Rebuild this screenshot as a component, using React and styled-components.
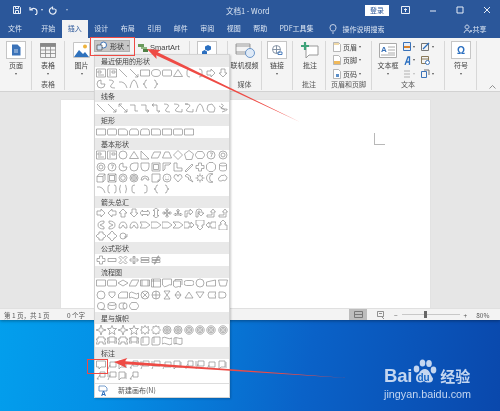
import React from "react";
import styled, { createGlobalStyle } from "styled-components";

const Global = createGlobalStyle`
  html, body { margin: 0; padding: 0; background: #0a6fd0; }
  * { box-sizing: border-box; }
`;

const Root = styled.div`
  position: relative; width: 500px; height: 411px; overflow: hidden;
  font-family: "Noto Sans CJK SC", "Liberation Sans", sans-serif;
  font-size: 7px; color: #444; filter: blur(0.4px);
  display: flex; flex-direction: column;
  background: linear-gradient(100deg, #02a6f0 0%, #0490e6 30%, #0a62c8 65%, #0a48ac 100%);
`;
const Win = styled.div`
  width: 500px; height: 320px; display: flex; flex-direction: column; flex: none;
  box-shadow: 0 1px 3px rgba(0,0,0,.35);
`;
const TitleBar = styled.div`
  height: 20px; background: #2b579a; color: #e8eef7; display: flex; align-items: center;
  position: relative; flex: none;
`;
const QuickBar = styled.div`display: flex; align-items: center; padding-left: 13px; width: 226px;`;
const QuickIcon = styled.span`display: flex; margin-left: ${p => p.$ml || 0}px;`;
const Title = styled.div`width: 139px; font-size: 7.5px; color: #dbe5f2; white-space: nowrap;`;
const Login = styled.div`
  width: 24px; height: 11px; background: #fff; color: #2b579a; font-size: 7px; line-height: 11px; text-align: center;
`;
const WinBtns = styled.div`display: flex; align-items: center; margin-left: 12px; gap: 16px;`;
const TabRow = styled.div`
  height: 18px; background: #2b579a; display: flex; align-items: stretch; flex: none; padding-left: 2px;
`;
const Tab = styled.div`
  width: ${p => p.$w || 26.5}px; margin-right: ${p => p.$mr || 0}px; margin-left: ${p => p.$ml || 0}px;
  text-align: center; line-height: 17px; white-space: nowrap;
  color: ${p => (p.$active ? "#2b579a" : "#dde6f3")};
  background: ${p => (p.$active ? "#f3f3f3" : "transparent")};
`;
const Search = styled.div`display: flex; align-items: center; gap: 6px; margin-left: 12px; color: #dde6f3;`;
const Share = styled.div`display: flex; align-items: center; gap: 1px; margin-left: 78px; color: #dde6f3;`;

const Ribbon = styled.div`
  height: 54px; background: #f4f4f4; border-bottom: 1px solid #d2d2d2; display: flex; padding: 3px 0 1px; flex: none; position: relative;
`;
const Group = styled.div`
  width: ${p => p.$w}px; border-right: 1px solid #d8d8d8;
  display: flex; flex-direction: column; flex: none;
`;
const GroupBody = styled.div`
  flex: 1; display: flex; align-items: flex-start; gap: ${p => p.$gap || 0}px;
  padding-left: ${p => p.$pl || 0}px;
`;
const GroupLabel = styled.div`height: 11px; line-height: 10px; text-align: center; color: #555; white-space: nowrap;`;
const Big = styled.div`
  width: ${p => p.$w || 18}px; display: flex; flex-direction: column; align-items: center; flex: none; white-space: nowrap;
`;
const IconBox = styled.div`
  width: ${p => p.$w || 20}px; height: 18px; display: flex; align-items: center; justify-content: center;
  background: ${p => (p.$framed ? "#fff" : "transparent")};
  border: 1px solid ${p => (p.$framed ? "#c6c6c6" : "transparent")};
  flex: none;
`;
const BigLabel = styled.div`height: 10px; line-height: 11px; margin-top: 1px; color: #444;`;
const Caret = styled.div`
  width: 0; height: 0; border-left: 1.5px solid transparent; border-right: 1.5px solid transparent;
  border-top: 2px solid ${p => p.$c || "#555"}; margin-top: ${p => p.$mt ?? 3}px; margin-left: ${p => p.$ml || 0}px; flex: none;
`;
const ShapeBtn = styled.div`
  width: 36px; height: 12px; margin: -1px 0 0 3px; background: #c6c6c6; border: 1px solid #b0b0b0; display: flex; align-items: center; gap: 2px; padding-left: 1px; color: #333; flex: none;
`;
const SmartArt = styled.div`
  display: flex; align-items: center; gap: 2px; margin: 0 0 0 8px; height: 12px; font-family: "Liberation Sans", sans-serif; font-size: 7.5px; color: #444; flex: none;
`;
const SmallCol = styled.div`display: flex; flex-direction: column; gap: 2.5px; flex: none; margin-left: ${p => p.$ml || 0}px;`;
const SmallRow = styled.div`display: flex; align-items: center; gap: 2px; height: 11px; white-space: nowrap; color: #444;`;
const Omega = styled.span`color: #2b6fc0; font: 700 10px "Liberation Sans", sans-serif;`;
const Chevron = styled.svg`position: absolute; right: 4px; bottom: 2px;`;

const DocArea = styled.div`
  height: 216px; background: #e6e6e6; flex: none; padding: 8px 0 0 61px; overflow: hidden;
`;
const Page = styled.div`
  width: 369px; height: 300px; background: #fff; box-shadow: 0 0 1px #ccc; padding: 33px 0 0 313px;
`;
const CropMark = styled.div`width: 11px; height: 12px; border-left: 1px solid #b8b8b8; border-bottom: 1px solid #b8b8b8;`;

const Status = styled.div`
  height: 12px; background: #f3f3f3; display: flex; align-items: center; color: #555; flex: none; border-top: 1px solid #e0e0e0; padding-left: 4px; font-size: 6.5px;
`;
const StatusText = styled.span`width: ${p => p.$w}px; white-space: nowrap; flex: none;`;
const ViewBtn = styled.div`width: 18px; height: 11px; background: #bdbdbd; display: flex; align-items: center; justify-content: center; margin-left: 262px; flex: none;`;
const Zoomer = styled.div`display: flex; align-items: center; margin-left: 10px; flex: none;`;
const ZoomSign = styled.span`margin-left: ${p => p.$ml || 0}px;`;
const Slider = styled.div`width: 58px; height: 1px; background: #c8c8c8; margin: 0 4px; position: relative;`;
const Thumb = styled.div`position: absolute; left: 22px; top: -3px; width: 3px; height: 7px; background: #666;`;
const Pct = styled.span`margin-left: 9px;`;

const Menu = styled.div`
  position: absolute; left: 94px; top: 54px; width: 136px; height: 344px; background: #fff;
  border: 1px solid #d4d4d4; box-shadow: 1px 1px 2px rgba(0,0,0,.2); display: flex; flex-direction: column;
`;
const Head = styled.div`
  height: 12px; line-height: 12px; background: #e9e9e9; padding-left: 6px; color: #444; flex: none;
`;
const Sec = styled.div`padding: 0 0 0.55px 0; flex: none;`;
const IconRow = styled.div`height: 11.3px; display: flex; align-items: center; padding-left: 1px;`;
const Sh = styled.svg`width: 10px; height: 10px; margin-right: 1.05px; flex: none; fill: none; stroke: #8c8c8c; stroke-width: .7;`;
const NewCanvas = styled.div`
  flex: 1; border-top: 1px solid #ddd; display: flex; align-items: center; gap: 10px; padding-left: 3px; color: #555;
`;

const Mark = styled.div`
  position: absolute; left: ${p => p.$x}px; top: ${p => p.$y}px; width: ${p => p.$w}px; height: ${p => p.$h}px;
  border: 1.3px solid #ee4b45;
`;
const Overlay = styled.svg`position: absolute; left: 0; top: 0; pointer-events: none;`;

const Logo = styled.div`
  position: absolute; left: 384px; top: 358px; width: 92px; color: #c4d6f0; display: flex; flex-direction: column;
`;
const LogoTop = styled.div`display: flex; align-items: flex-end; height: 28px;`;
const Bai = styled.span`font: 700 18.5px/21px "Liberation Sans", sans-serif; letter-spacing: -.2px;`;
const Jing = styled.span`font: 700 15px/20px "Noto Sans CJK SC", sans-serif; margin-left: 2px; white-space: nowrap;`;
const Url = styled.div`font: 10.8px/12px "Liberation Sans", sans-serif; margin-top: 2px; white-space: nowrap;`;

const c = (r, cx = 5, cy = 5) => `M${cx - r} ${cy}a${r} ${r} 0 1 0 ${2 * r} 0a${r} ${r} 0 1 0 ${-2 * r} 0`;
const S = {
  rect: "M.5 2h9v6h-9z", sq: "M1 1h8v8H1z", rr: "M1.5 2h7q1 0 1 1v4q0 1-1 1h-7q-1 0-1-1V3q0-1 1-1z",
  snip: "M.5 2h7l2 2v4h-9z", snip2: "M2 2h6l1.5 2v4h-9V4z", rnd: "M2.5 2h5q2 0 2 3v3h-9V5q0-3 2-3z", rr2: "M.5 2h7q2 0 2 2v4h-9z",
  txt: "M.5 1h9v8h-9zM2 3h3v2H2zM2 7h6", vtxt: "M.5 1h9v8h-9zM5 3h3v2H5zM3 2v6",
  line: "M1 1l8 8", arr: "M1 1l8 8M9 9V6M9 9H6", dbl: "M1 1l8 8M9 9V6M9 9H6M1 1v3M1 1h3",
  elb: "M1 2h5v6h3", elbA: "M1 2h5v6h3M9 8l-2-1.5M9 8l-2 1.5", elbD: "M1 2h5v6h3M1 2l2-1.5M1 2l2 1.5M9 8l-2 1.5",
  cv: "M2 1q7 0 3 4t3 4", cvA: "M1 1q8 0 3 4t5 4M9 9V6", cvD: "M1 1q8 0 3 4t5 4M9 9V6M1 1h3", arc2: "M1 9Q3 1 5 1t4 8", free: "M2 2L6 1l3 4-1 4H3L1 6z", scr: "M3 1q4 1 1 3t3 2-3 3M1 3l6 4",
  ell: c(4), elw: "M.5 5a4.5 3.5 0 1 0 9 0a4.5 3.5 0 1 0-9 0", tri: "M5 1.5l4.5 7h-9z", rtri: "M1 1v8h8z", para: "M3 2h7L7 8H0z", trap: "M3 2h4l2.5 6h-9z", dia: "M5 .5L9.5 5 5 9.5.5 5z",
  pent: "M5 .5l4.5 3.4-1.7 5.6H2.2L.5 3.9z", hex: "M2.5 1.5h5L10 5 7.5 8.5h-5L0 5z", oct: "M3 .5h4L9.5 3v4L7 9.5H3L.5 7V3z", c7: c(4) + "M4 3h2.5L5 7", c10: c(4) + c(2),
  pie: "M5 1a4 4 0 1 0 4 4H5z", tear: "M9 1v4a4 4 0 1 1-4-4z", half: "M1 1h8v4a4 4 0 0 1-8 0z", frame: "M1 1h8v8H1zM2.5 2.5h5v5h-5z", hfr: "M1 1h8L7 3H3v4L1 9z", lsh: "M1 1h3v5h5v3H1z", pen: "M1 9l7-7 1 1-7 7z", cross: "M3.5 1h3v2.5H9v3H6.5V9h-3V6.5H1v-3h2.5z", can: "M1.5 2.5a3.5 1.5 0 0 1 7 0v5a3.5 1.5 0 0 1-7 0zM1.5 2.5a3.5 1.5 0 0 0 7 0",
  cube: "M1 3.5h6v5.5H1zM1 3.5L3 1h6v5.5L7 9M7 3.5L9 1", bev: "M1 1h8v8H1zM2.5 2.5h5v5h-5zM1 1l1.5 1.5M9 1L7.5 2.5M1 9l1.5-1.5M9 9L7.5 7.5", don: c(4) + c(2.3), no: c(4) + c(2.6) + c(1.3), barc: "M1 7a4 4 0 0 1 8 0H7a2 2 0 0 0-4 0z", fold: "M1 1h8v6L7 9H1zM7 9V7h2", sm: c(4) + "M3 6q2 2 4 0M3.5 3.8h.5M6 3.8h.5", heart: "M5 9L1 4.5Q1 1.5 3 1.5t2 2q0-2 2-2t2 3z", lit: "M3 1l4 3-1 1 3 4-5-3 1-1-4-2z", sun: c(2.5) + "M5 .5v1.5M5 8v1.5M.5 5H2M8 5h1.5M2 2l1 1M7 7l1 1M8 2L7 3M3 7L2 8", moon: "M7 1a4.5 4.5 0 1 0 0 8 3.5 4 0 0 1 0-8z", cloud: "M3 8a2 2 0 0 1-1-4q1-2.5 3-1.5 2-1.5 3 .5 2 1.500 0 4-2 1.500-3 0-1 1-2 1z",
  arc: "M1 3q6-1 8 6", bp: "M3 1Q1 1 1 3v4q0 2 2 2M7 1q2 0 2 2v4q0 2-2 2", brp: "M3 1Q2 1 2 3t-1 2q1 0 1 2t1 2M7 1q1 0 1 2t1 2q-1 0-1 2t-1 2", bl: "M6 1Q3 1 3 3v4q0 2 3 2", br: "M4 1q3 0 3 2v4q0 2-3 2", cl: "M7 1Q5 1 5 3t-2 2q2 0 2 2t2 2", cr: "M3 1q2 0 2 2t2 2q-2 0-2 2t-2 2",
  aR: "M1 3h4V1l4 4-4 4V7H1z", aL: "M9 3H5V1L1 5l4 4V7h4z", aU: "M3 9V5H1l4-4 4 4H7v4z", aD: "M3 1v4H1l4 4 4-4H7V1z", aLR: "M0 5l2.500-3v1.500h5V2L10 5 7.500 8V6.500h-5V8z", aUD: "M5 0L2 2.500h1.500v5H2L5 10l3-2.500H6.500v-5H8z", aQ: "M5 .5L3.500 2H4.500v2.500H2V3.500L.5 5 2 6.500v-1H4.500V8H3.500L5 9.500 6.500 8h-1V5.500H8v1L9.500 5 8 3.500v1H5.500V2h1z", aT: "M5 1L3.500 3h1v3H2.500V5L1 6.500 2.500 8V7h5v1L9 6.500 7.500 5v1h-2V3h1z", aB: "M1 9V3h5V1l3 3-3 3V5H3v4z", aTu: "M1 9V4q0-3 3-3t3 3v1h2L6 8 3 5h2V4q0-1-1-1T3 4v5z", aBu: "M1 7h5V4H4.500L7 1l2.500 3H8v5H1z", cvR: "M8 1Q2 1 2 5t6 4v-2L4 5l4-2z", cvL: "M2 1q6 0 6 4t-6 4V7l4-2-4-2z", cvU: "M1 8q0-6 4-6t4 6H7L5 5 3 8z", notch: "M0 2h6l4 3-4 3H0l2-3z", pentA: "M0 2h6l4 3-4 3H0z", chev: "M0 2h6l4 3-4 3H0l3-3z",
  cR: "M0 2h5v2h2V2l3 3-3 3V6H5v2H0z", cD: "M1 0h8v5H7v2h1l-3 3-3-3h1V5H1z", cL: "M10 2H5v2H3V2L0 5l3 3V6h2v2h5z", cU: "M1 10h8V5H7V3h1L5 0 2 3h1v2H1z", cLR: "M2 3h1V1h4v2h1l2 2-2 2H7v2H3V7H2L0 5z", cQ: "M5 0l2 2v1h1l2 2-2 2H7v1l-2 2-2-2V7H2L0 5l2-2h1V2z", cir: c(3) + "M9 3v3H6",
  plus: "M3.500 1h3v2.500H9v3H6.500V9h-3V6.500H1v-3h2.500z", minus: "M1 3.500h8v3H1z", times: "M2.500 1L5 3.500 7.500 1 9 2.500 6.500 5 9 7.500 7.500 9 5 6.500 2.500 9 1 7.500 3.500 5 1 2.500z", div: "M1 4h8v2H1zM4 1.500h2v1.500H4zM4 7h2v1.500H4z", eq: "M1 2.500h8v2H1zM1 5.500h8v2H1z", neq: "M1 2.500h8v2H1zM1 5.500h8v2H1zM3 9l4-8h1L4 9z",
  fTerm: "M2.500 2.500h5a2.500 2.500 0 0 1 0 5h-5a2.500 2.500 0 0 1 0-5z", fDec: "M5 2l5 3-5 3-5-3z", fIn: "M3 2h7L7 8H0z", fPre: "M.5 2h9v6h-9zM2 2v6M8 2v6", fInt: "M.5 1h9v8h-9zM2.500 1v8M.5 3h9", fDoc: "M.5 1h9v6q-2-1-4.500 1T.5 7z", fMul: "M.5 3h7v6q-2-1-3.500 0T.5 8zM2 3V1.500h7V7", fMan: "M.5 4L9.500 2v6H.5z", fTrap: "M.5 2h9L8 8H2z", fOff: "M2 2h6v3L5 8 2 5z", fCard: "M3 2h6.500v6H.5V4.500z", fTape: "M.5 3q2-2 4.500 0t4.500 0v5q-2 1.500-4.500 0T.5 8z", fSum: c(4) + "M2.200 2.200l5.600 5.600M7.800 2.200L2.200 7.800", fOr: c(4) + "M5 1v8M1 5h8", fCol: "M2 1h6L2 9h6z", fSort: "M5 1l3 4-3 4-3-4zM2 5h6", fExt: "M5 2l4 6H1z", fMer: "M1 2h8L5 8z", fSto: "M3 2h7Q8 5 10 8H3Q1 5 3 2z", fDel: "M1 2h4a3 3 0 0 1 0 6H1z", fDsk: c(3.6) + "M5 8.600h4.500", fDrm: "M1 3a4 1.500 0 0 1 8 0v4a4 1.500 0 0 1-8 0zM1 3a4 1.500 0 0 0 8 0", fDis: "M3 2h4q2 0 2 3t-2 3H3Q1 8 1 5t2-3zM7 2q-2 0-2 3t2 3",
  s4: "M5 0l1.200 3.800L10 5 6.200 6.200 5 10 3.800 6.200 0 5l3.800-1.200z", s5: "M5 .5l1.300 3H9.500L7 6l1 3.500L5 7.500 2 9.500 3 6 .5 3.500h3.200z", s8: "M5 .5L6.200 2.500 8.500 1.500 8 4 9.500 5 8 6l.5 2.500L6.200 7.500 5 9.500 3.800 7.500 1.500 8.500 2 6 .5 5 2 4 1.500 1.500 3.800 2.500z", s10: "M5 .5L6 2l2-.5V3.500l1.500 1.500L8 6.500v2L6 8 5 9.500 4 8l-2 .5v-2L.5 5 2 3.500v-2L4 2z", sn: c(4) + c(2.500) + "M4 4h2v2H4z", sd: c(4.200) + c(2.800) + c(1.400),
  rb: "M0 3h2V1h6v2h2L8.500 5 10 8H7V6H3v2H0L1.500 5z", rb2: "M2 1h6v5H2zM2 2H0l1 2-1 3h3M8 2h2L9 4l1 3H7", sc: "M3 1h6v6q0 2-2 2H1V3q0-2 2-2zM3 1v6", wv: "M0 2q2.500-1.500 5 0t5 0v6q-2.500 1.500-5 0t-5 0z", wv2: "M1 2q2-1 4 0t4 0v6q-2 1-4 0t-4 0zM3 2v6",
  co: "M.5 1h9v6H5L3 9V7H.5z", coL: "M3 2h6v5H3zM3 5l-2 4", coF: "M1 1h6v6H3L1 9zM8 2v6", coB: "M4 1h5v5H4zM4 4L1 8h2", coD: "M3 1h6v5H3zM1 1v5M3 4L1 9",
};
const rows = [
  ["最近使用的形状", [["txt","vtxt","line","arr","rect","elw","rr","tri","bl","br","aR","aD"], ["pie","cv","arc","arc2","cl","cr"]]],
  ["线条", [["line","arr","dbl","elb","elbA","elbD","cv","cvA","cvD","arc2","free","scr"]]],
  ["矩形", [["rect","rr","snip","snip2","rnd","rr2","rect","rr","rect"]]],
  ["基本形状", [["txt","vtxt","ell","tri","rtri","para","trap","dia","pent","hex","c7","c10"], ["c10","c7","pie","tear","half","frame","hfr","lsh","pen","cross","oct","can"], ["cube","bev","don","no","barc","fold","sm","heart","lit","sun","moon","cloud"], ["arc","bp","brp","bl","br","cl","cr"]]],
  ["箭头总汇", [["aR","aL","aU","aD","aLR","aUD","aQ","aT","aB","aTu","aBu","aBu"], ["cvR","cvL","cvU","cvU","notch","pentA","pentA","chev","cR","cD","cL","cU"], ["cLR","cQ","cir"]]],
  ["公式形状", [["plus","minus","times","div","eq","neq"]]],
  ["流程图", [["rect","rr","fDec","fIn","fPre","fInt","fDoc","fMul","fTerm","ell","fMan","fTrap"], ["ell","fOff","fCard","fTape","fSum","fOr","fCol","fSort","fExt","fMer","fSto","fDel"], ["fDsk","fDrm","fDis","hex"]]],
  ["星与旗帜", [["s4","s5","s4","s5","s8","s10","sn","sn","sd","sd","sd","sd"], ["rb","rb2","rb","rb2","sc","sc","wv","wv2"]]],
  ["标注", [["co","coL","coF","coB","coD","coD","coL","coF","coB","coD","coL","coF"], ["coB","coD","coF","coB"]]],
];

const arrowPts = (x1, y1, x2, y2) => {
  const l = Math.hypot(x2 - x1, y2 - y1), ux = (x2 - x1) / l, uy = (y2 - y1) / l, nx = -uy, ny = ux;
  const p = (d, w) => `${x2 - ux * d + nx * w},${y2 - uy * d + ny * w}`;
  return [`${x1},${y1}`, p(11, 1.6), p(13, 5), `${x2},${y2}`, p(13, -5), p(11, -1.6)].join(" ");
};

const Ico = ({ w = 16, h = 16, vb, children, ...r }) => (
  <svg width={w} height={h} viewBox={vb || `0 0 ${w} ${h}`} {...r}>{children}</svg>
);

export default function App() {
  return (
    <Root>
      <Global />
      <Win>
        <TitleBar>
          <QuickBar>
            <Ico w={8} h={8} fill="none" stroke="#e8eef7"><path d="M.5.5h6l1 1v6h-7zM2.500.5v2h3v-2M2.500 7.500v-3h3v3" /></Ico>
            <QuickIcon $ml={8}><Ico w={9} h={9} fill="none" stroke="#e8eef7" strokeWidth="1.200"><path d="M1 1v3h3M1.500 4Q3 2 5.500 2.500T8 6 6 8.500" /></Ico></QuickIcon>
            <Caret $mt={0} $ml={3} $c="#dde6f3" />
            <QuickIcon $ml={5}><Ico w={9} h={9} fill="none" stroke="#e8eef7" strokeWidth="1.200"><path d="M7.500 3a3.300 3.300 0 1 1-3-1.500M4.500.5v2.500h2.500" /></Ico></QuickIcon>
            <Caret $mt={0} $ml={9} $c="#a9bcd8" />
          </QuickBar>
          <Title>文档1 - Word</Title>
          <Login>登录</Login>
          <WinBtns>
            <Ico w={9} h={8} fill="none" stroke="#e8eef7"><path d="M.5.5h8v7h-8zM4.500 6V3M3 4l1.500-1.500L6 4" /></Ico>
            <QuickIcon $ml={4}><Ico w={7} h={7} fill="none" stroke="#e8eef7"><path d="M0 4h6" /></Ico></QuickIcon>
            <QuickIcon $ml={3}><Ico w={8} h={8} fill="none" stroke="#e8eef7"><path d="M1 1h6v6H1z" /></Ico></QuickIcon>
            <QuickIcon $ml={3}><Ico w={8} h={8} fill="none" stroke="#e8eef7"><path d="M1 1l6 6M7 1L1 7" /></Ico></QuickIcon>
          </WinBtns>
        </TitleBar>
        <TabRow>
          <Tab $w={26} $mr={7}>文件</Tab>
          <Tab>开始</Tab>
          <Tab $active>插入</Tab>
          {["设计", "布局", "引用", "邮件", "审阅", "视图", "帮助"].map(t => <Tab key={t}>{t}</Tab>)}
          <Tab $w={40} $ml={3}>PDF工具集</Tab>
          <Search>
            <Ico w={8} h={12} fill="none" stroke="#e8eef7" strokeWidth=".8"><path d="M2.500 8Q1 6.500 1 4.500a3 3 0 0 1 6 0Q7 6.500 5.500 8zM3 10h2" /></Ico>
            <span>操作说明搜索</span>
          </Search>
          <Share>
            <Ico w={9} h={10} fill="none" stroke="#e8eef7" strokeWidth=".8"><path d="M1 9q1-3 3-3t3 3M4 1a2 2 0 1 0 .01 0M7 7h2M8 6v2" /></Ico>
            <span>共享</span>
          </Share>
        </TabRow>
        <Ribbon>
          <Group $w={32}>
            <GroupBody $pl={6}>
              <Big $w={20}>
                <IconBox $framed><Ico w={10} h={12}><path d="M1 .5h5.500L9.500 3.500V11.500H1z" fill="#3a72b8" /><path d="M3 6h4M3 8h4" stroke="#fff" strokeWidth=".7" /></Ico></IconBox>
                <BigLabel>页面</BigLabel><Caret />
              </Big>
            </GroupBody>
            <GroupLabel />
          </Group>
          <Group $w={33}>
            <GroupBody $pl={6}>
              <Big $w={20}>
                <IconBox><Ico w={16} h={15} fill="none" stroke="#888" strokeWidth=".8"><path d="M.5 .5h15v14H.5z" /><path d="M.5 .5h15v3H.5z" fill="#888" /><path d="M.5 7h15M.5 10.500h15M5.500 3.500v11M10.500 3.500v11" /></Ico></IconBox>
                <BigLabel>表格</BigLabel><Caret />
              </Big>
            </GroupBody>
            <GroupLabel>表格</GroupLabel>
          </Group>
          <Group $w={125}>
            <GroupBody $pl={7}>
              <Big $w={19}>
                <IconBox><Ico w={17} h={16}><path d="M.5.5h16v15H.5z" fill="#fff" stroke="#c6c6c6" /><path d="M1 15l5-7 4 4 2-2 4 5z" fill="#2f72bd" /><circle cx="12" cy="4.500" r="2" fill="#eeb33c" /></Ico></IconBox>
                <BigLabel>图片</BigLabel><Caret />
              </Big>
              <ShapeBtn>
                <Ico w={12} h={10}><circle cx="7.500" cy="4" r="3" fill="#fff" stroke="#3a72b8" /><path d="M1 4h5v5H1z" fill="#cfe0f3" stroke="#4a4a4a" strokeWidth=".7" /></Ico>
                形状<Caret $mt={0} $ml={1} />
              </ShapeBtn>
              <SmartArt>
                <Ico w={10} h={9}><path d="M0 1h6v3H0z" fill="#6a9a5c" /><path d="M3 4h6v2H3z" fill="#8fb781" /><path d="M5 6h5v3H5z" fill="#4f7f45" /></Ico>
                SmartArt
              </SmartArt>
            </GroupBody>
            <GroupLabel />
          </Group>
          <Group $w={38}>
            <GroupBody $pl={7}>
              <IconBox $framed><Ico w={12} h={12}><path d="M7 1l3 1.500v3L7 7 4 5.500v-3z" fill="#2b6fc0" /><path d="M3.500 6l2.500 1.500v2.500L3.500 11.500 1 10V7.500z" fill="#2b6fc0" /></Ico></IconBox>
            </GroupBody>
          </Group>
          <Group $w={34}>
            <GroupBody $pl={3}>
              <Big $w={27}>
                <IconBox $w={24}><Ico w={20} h={16} fill="none" stroke="#777" strokeWidth=".7"><path d="M1 2h14v10H1zM1 4h14M1 10h14" /><circle cx="15" cy="11" r="4.500" fill="#dfeaf7" stroke="#3a72b8" /></Ico></IconBox>
                <BigLabel>联机视频</BigLabel>
              </Big>
            </GroupBody>
            <GroupLabel>媒体</GroupLabel>
          </Group>
          <Group $w={31}>
            <GroupBody $pl={5}>
              <Big $w={20}>
                <IconBox $framed><Ico w={12} h={12} fill="none" stroke="#7a8a9c" strokeWidth=".9"><circle cx="5.500" cy="5.500" r="4" /><path d="M1.500 5.500h8M5.500 1.500v8" /><path d="M7 8h4v2.500H7z" stroke="#3a72b8" /></Ico></IconBox>
                <BigLabel>链接</BigLabel><Caret />
              </Big>
            </GroupBody>
            <GroupLabel />
          </Group>
          <Group $w={33}>
            <GroupBody $pl={8}>
              <Big $w={18}>
                <IconBox><Ico w={18} h={17} fill="none"><path d="M5 4h12v9H8l-3 3z" fill="#fff" stroke="#999" /><path d="M4 0v8M0 4h8" stroke="#3fa37a" strokeWidth="2.200" /></Ico></IconBox>
                <BigLabel>批注</BigLabel>
              </Big>
            </GroupBody>
            <GroupLabel>批注</GroupLabel>
          </Group>
          <Group $w={46}>
            <GroupBody $pl={7}>
              <SmallCol>
                {[["页眉", "#f0d9a8", "M1 1h5v2H1z"], ["页脚", "#f0b95a", "M1 6h6v3H1z"], ["页码", "#5b8fc9", "M3 5h3v3H3z"]].map(([t, col, d]) => (
                  <SmallRow key={t}>
                    <Ico w={8} h={10}><path d="M.5.5h5l2 2v7h-7z" fill="#fff" stroke="#999" strokeWidth=".7" /><path d={d} fill={col} /></Ico>
                    {t}<Caret $mt={0} />
                  </SmallRow>
                ))}
              </SmallCol>
            </GroupBody>
            <GroupLabel>页眉和页脚</GroupLabel>
          </Group>
          <Group $w={73}>
            <GroupBody $pl={5} $gap={1}>
              <Big $w={22}>
                <IconBox><Ico w={18} h={15} fill="none"><path d="M.5.5h17v14H.5z" fill="#fff" stroke="#aaa" /><path d="M9 4h7M9 7h7M9 10h7M2 12h14" stroke="#aaa" /><text x="2" y="9" fontSize="8" fontWeight="700" fill="#3a72b8" fontFamily="Liberation Sans">A</text></Ico></IconBox>
                <BigLabel>文本框</BigLabel><Caret />
              </Big>
              <SmallCol $ml={3}>
                <SmallRow><Ico w={8} h={9}><path d="M.5.5h7v8h-7z" fill="#e8eef7" stroke="#3a72b8" /><path d="M1 4h6v2H1z" fill="#d9822b" /></Ico><Caret $mt={0} /></SmallRow>
                <SmallRow><Ico w={8} h={9}><path d="M2 9L5 1h1.500v8M3 6h3.500" fill="none" stroke="#2b6fc0" strokeWidth="1.300" /></Ico><Caret $mt={0} /></SmallRow>
                <SmallRow><Ico w={8} h={9}><path d="M1 2h6M1 5h6M1 8h6" stroke="#c8c8c8" strokeWidth="1.300" /></Ico><Caret $mt={0} $c="#bbb" /></SmallRow>
              </SmallCol>
              <SmallCol $ml={5}>
                <SmallRow><Ico w={9} h={9} fill="none"><path d="M.5 1.500h7v7h-7z" stroke="#777" /><path d="M2 7L8 1" stroke="#2b6fc0" strokeWidth="1.200" /></Ico><Caret $mt={0} /></SmallRow>
                <SmallRow><Ico w={9} h={9} fill="none"><path d="M.5.5h7v7h-7zM.5 3h7" stroke="#8a7a5a" /><circle cx="6.500" cy="6.500" r="2" stroke="#3a72b8" fill="#fff" /></Ico></SmallRow>
                <SmallRow><Ico w={9} h={9} fill="none"><path d="M.5 2.500h5v6h-5z" stroke="#3a72b8" /><path d="M3 1h5v5" stroke="#777" /></Ico><Caret $mt={0} /></SmallRow>
              </SmallCol>
            </GroupBody>
            <GroupLabel>文本</GroupLabel>
          </Group>
          <Group $w={32}>
            <GroupBody $pl={6}>
              <Big $w={20}>
                <IconBox $framed><Omega>Ω</Omega></IconBox>
                <BigLabel>符号</BigLabel><Caret />
              </Big>
            </GroupBody>
            <GroupLabel />
          </Group>
          <Chevron width="7" height="4" fill="none" stroke="#777" strokeWidth=".8"><path d="M.5 3.500L3.500.5l3 3" /></Chevron>
        </Ribbon>
        <DocArea><Page><CropMark /></Page></DocArea>
        <Status>
          <StatusText $w={63}>第 1 页，共 1 页</StatusText>
          <StatusText $w={20}>0 个字</StatusText>
          <ViewBtn><Ico w={9} h={7} fill="none" stroke="#777"><path d="M.5.5h8v6h-8zM.5 3.500h8" /></Ico></ViewBtn>
          <Zoomer>
            <Ico w={8} h={8} fill="none" stroke="#777" strokeWidth=".8"><path d="M.5.5h6v5h-6zM2 2.500h3M5 6l2 2" /></Ico>
            <ZoomSign $ml={9}>−</ZoomSign>
            <Slider><Thumb /></Slider>
            <ZoomSign>+</ZoomSign>
            <Pct>80%</Pct>
          </Zoomer>
        </Status>
      </Win>
      <Menu>
        {rows.map(([h, rs]) => (
          <Sec key={h}>
            <Head>{h}</Head>
            {rs.map((r, i) => (
              <IconRow key={i}>
                {r.map((k, j) => <Sh key={j} viewBox="0 0 10 10"><path d={S[k]} /></Sh>)}
              </IconRow>
            ))}
          </Sec>
        ))}
        <NewCanvas>
          <Ico w={10} h={11}><path d="M1 1h6l2 2v3H1z" fill="#fff" stroke="#3a72b8" strokeWidth=".7" /><text x="3" y="10.500" fontSize="7" fontWeight="700" fill="#2b6fc0" fontFamily="Liberation Sans">A</text></Ico>
          <span>新建画布(N)</span>
        </NewCanvas>
      </Menu>
      <Mark $x={90} $y={37} $w={45} $h={19} />
      <Mark $x={87} $y={359} $w={21} $h={15} />
      <Overlay width="500" height="411">
        <polygon points={arrowPts(300, 122, 147, 49)} fill="#ee4b45" />
        <polygon points={arrowPts(347, 378, 114, 362)} fill="#ee4b45" />
      </Overlay>
      <Logo>
        <LogoTop>
          <Bai>Bai</Bai>
          <Ico w={27} h={28} vb="0 0 24 28" style={{ marginLeft: -1 }}>
            <g fill="#c4d6f0">
              <ellipse cx="4" cy="11" rx="2.800" ry="3.400" /><ellipse cx="10" cy="5" rx="2.800" ry="3.600" /><ellipse cx="16.500" cy="5.500" rx="2.800" ry="3.600" /><ellipse cx="21" cy="12" rx="2.800" ry="3.400" />
              <path d="M12.500 11q3 0 5 4t3 5.500q0 4-4 4t-4-1-4 1q-5 0-5-4t3-5q2-4.500 6-4.500z" />
            </g>
            <text x="5" y="23" fontSize="10" fontWeight="700" fill="#1464c4" fontFamily="Liberation Sans">du</text>
          </Ico>
          <Jing>经验</Jing>
        </LogoTop>
        <Url>jingyan.baidu.com</Url>
      </Logo>
    </Root>
  );
}
